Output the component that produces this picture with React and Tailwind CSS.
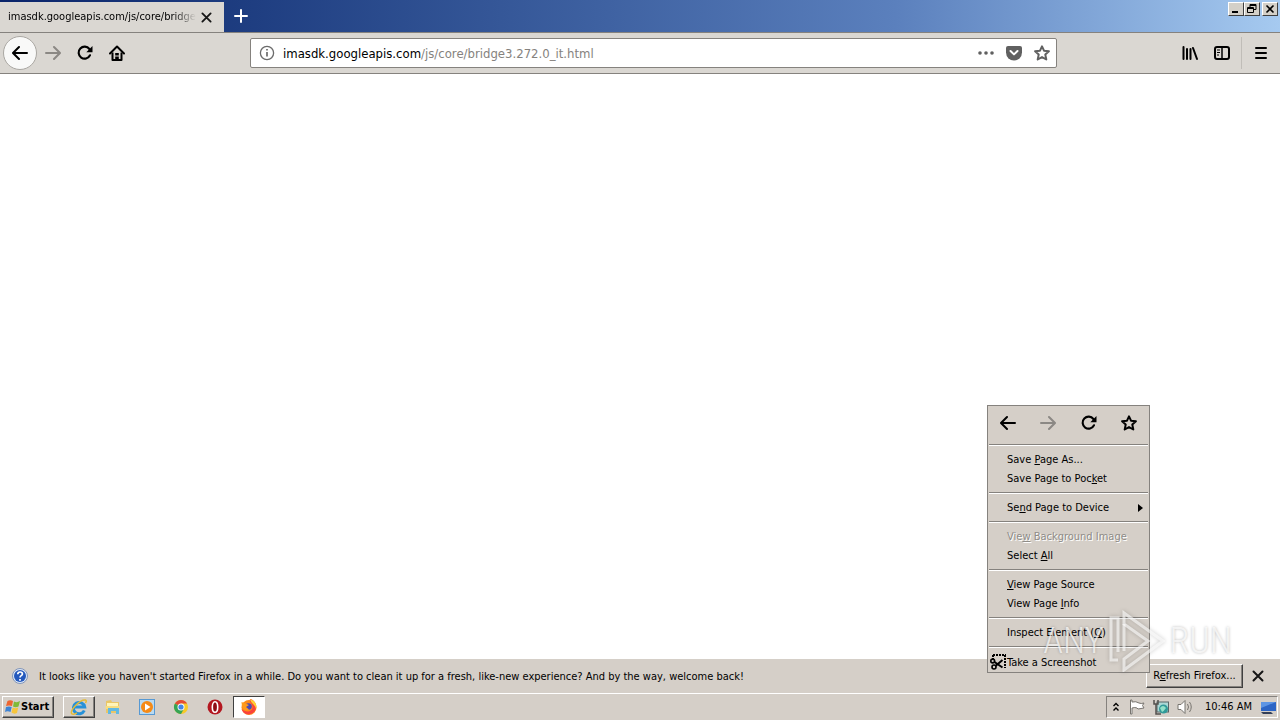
const ink = 'fill-none stroke-black';

function Back({ className = 'stroke-black' }) {
  return (
    <svg viewBox="0 0 16 16" className={`size-4 fill-none ${className}`} strokeWidth="2" strokeLinecap="round" strokeLinejoin="round">
      <path d="M15 8H1.5M7 2L1 8l6 6" />
    </svg>
  );
}
function Forward() {
  return (
    <svg viewBox="0 0 16 16" className="size-4 fill-none stroke-[#8b8884]" strokeWidth="2" strokeLinecap="round" strokeLinejoin="round">
      <path d="M1 8h13.5M9 2l6 6-6 6" />
    </svg>
  );
}
function Reload() {
  return (
    <svg viewBox="0 0 16 16" className="size-4">
      <path d="M13 10.3A6 6 0 1 1 12.4 4" className={ink} strokeWidth="2.1" strokeLinecap="round" />
      <path d="M15.5 1v6.2H9.3z" />
    </svg>
  );
}
function Home() {
  return (
    <svg viewBox="0 0 16 16" className="size-4">
      <path d="M1 8.5L8 1.5l7 7" className={ink} strokeWidth="2" strokeLinecap="round" strokeLinejoin="round" />
      <path d="M3.5 7.5V15h9V7.5" className={ink} strokeWidth="2" strokeLinejoin="round" />
      <path d="M6.2 8h3.6v2.500H6.200zM6.200 11.500h3.600V15H6.200z" />
    </svg>
  );
}
function Star({ className = 'stroke-black' }) {
  return (
    <svg viewBox="0 0 16 16" className={`size-4 fill-none ${className}`} strokeWidth="2" strokeLinejoin="round">
      <path d="M8 1.3l2 4.4 4.9.6-3.6 3.3 1 4.9L8 12.1l-4.3 2.4 1-4.9L1.1 6.3 6 5.7z" />
    </svg>
  );
}
function Close({ className = 'size-3' }) {
  return (
    <svg viewBox="0 0 12 12" className={`fill-none stroke-[#161616] ${className}`} strokeWidth="2" strokeLinecap="round">
      <path d="M1.5 1.5l9 9M10.5 1.5l-9 9" />
    </svg>
  );
}

function CaptionButton({ label, children }) {
  return (
    <button aria-label={label} className="flex h-[14px] w-4 items-center justify-center border border-t-white border-l-white border-r-[#404040] border-b-[#404040] bg-[#d4d0c8]">
      <svg viewBox="0 0 12 10" className="h-[10px] w-3 fill-none stroke-black">{children}</svg>
    </button>
  );
}

function TitleBar() {
  return (
    <header className="flex h-8 items-start bg-linear-to-r from-[#0a246a] from-0% via-[#5b80bd] via-70% to-[#a6caf0] to-100%">
      <div className="mt-0.5 flex h-[30px] w-56 items-center bg-[#dad7d2] pl-2">
        <span className="w-[188px] overflow-hidden whitespace-nowrap bg-linear-to-r from-black from-88% to-transparent bg-clip-text text-[11px] text-transparent">
          imasdk.googleapis.com/js/core/bridge3.272.0_it.html
        </span>
        <button aria-label="Close tab" className="ml-0.5 flex size-4 items-center justify-center"><Close className="size-[11px]" /></button>
      </div>
      <button aria-label="New tab" className="flex h-8 w-[34px] items-center justify-center">
        <svg viewBox="0 0 14 14" className="size-[14px] stroke-white" strokeWidth="2" strokeLinecap="round"><path d="M7 1v12M1 7h12" /></svg>
      </button>
      <div className="mt-0.5 mr-0.5 ml-auto flex">
        <CaptionButton label="Minimize"><path d="M2 8h6" strokeWidth="2" /></CaptionButton>
        <CaptionButton label="Restore"><path d="M4 3V.5h6v5H8M4 1.5h6M1.5 3.5h6v5h-6zM1.5 4.5h6" /></CaptionButton>
        <span className="w-0.5" />
        <CaptionButton label="Close"><path d="M2.5 1.5l7 7M9.5 1.5l-7 7" strokeWidth="1.6" /></CaptionButton>
      </div>
    </header>
  );
}

function Toolbar() {
  return (
    <nav className="flex h-[42px] items-center border-y border-[#85827e] bg-[#dad7d2]">
      <button aria-label="Back" className="ml-[3px] flex size-[34px] items-center justify-center rounded-full border border-[#aaa7a2] bg-[#f9f9f8]"><Back /></button>
      <button aria-label="Forward" className="ml-2 flex size-4" disabled><Forward /></button>
      <button aria-label="Reload" className="ml-4 flex size-4"><Reload /></button>
      <button aria-label="Home" className="ml-4 flex size-4"><Home /></button>
      <div className="ml-[125px] flex h-[30px] flex-1 items-center rounded-xs border border-[#85827e] bg-white pr-1.5 pl-2">
        <svg viewBox="0 0 16 16" className="size-4 fill-none stroke-[#6b6b6b]" strokeWidth="1.3">
          <circle cx="8" cy="8" r="6.6" /><path d="M8 7v4.5M8 4v1.6" strokeWidth="1.7" />
        </svg>
        <a href="#address" className="ml-2 flex-1 pt-0.5 text-[13px] whitespace-nowrap text-[#85827e]">
          <span className="text-black">imasdk.googleapis.com</span>/js/core/bridge3.272.0_it.html
        </a>
        <button aria-label="Page actions">
          <svg viewBox="0 0 16 16" className="size-4 fill-[#606060]"><circle cx="2" cy="8" r="1.800" /><circle cx="8" cy="8" r="1.800" /><circle cx="14" cy="8" r="1.800" /></svg>
        </button>
        <button aria-label="Save to Pocket" className="ml-3">
          <svg viewBox="0 0 16 16" className="size-4"><path d="M2 1h12q2 0 2 2v4.500a8 8 0 0 1-16 0V3q0-2 2-2z" className="fill-[#606060]" /><path d="M4.500 6L8 9.400 11.500 6" className="fill-none stroke-white" strokeWidth="2" strokeLinecap="round" strokeLinejoin="round" /></svg>
        </button>
        <button aria-label="Bookmark" className="ml-3"><Star className="stroke-[#606060]" /></button>
      </div>
      <button aria-label="Library" className="ml-[125px]">
        <svg viewBox="0 0 16 16" className={`size-4 ${ink}`} strokeWidth="2" strokeLinecap="round"><path d="M1.500 2v12M5 4v10M8.500 4v10M11 3l4 11" /></svg>
      </button>
      <button aria-label="Sidebars" className="ml-4">
        <svg viewBox="0 0 16 16" className={`size-4 ${ink}`} strokeWidth="2"><rect x="1" y="2" width="14" height="12" rx="2" /><path d="M8 2v12" strokeWidth="1.500" /><path d="M3 5h3M3 7.500h3M3 10h2" strokeWidth="1" /></svg>
      </button>
      <span className="ml-[11px] h-8 w-px bg-[#c0bdb8]" />
      <button aria-label="Open menu" className="mr-[11px] ml-[11px]">
        <svg viewBox="0 0 16 16" className={`size-4 ${ink}`} strokeWidth="2" strokeLinecap="round"><path d="M3 3h10M3 8h10M3 13h10" /></svg>
      </button>
    </nav>
  );
}

const Separator = () => <hr className="mx-px my-1 h-0.5 border-t border-b border-t-[#85827e] border-b-white" />;

function MenuItem({ before = '', accessKey = '', after = '', disabled = false, children }) {
  return (
    <button role="menuitem" disabled={disabled} className="flex h-[19px] w-full items-center pl-[19px] text-left whitespace-pre disabled:text-[#8f8c87] disabled:[text-shadow:1px_1px_0_#fff]">
      <span className="pt-0.5">{before}<span className="underline underline-offset-1">{accessKey}</span>{after}</span>
      {children}
    </button>
  );
}

function ContextMenu() {
  return (
    <div role="menu" className="absolute right-[130px] bottom-[47px] w-[163px] border border-[#85827e] bg-[#d5cfc8]">
      <div className="flex h-[34px] items-center justify-between px-3">
        <button aria-label="Back"><Back /></button>
        <button aria-label="Forward" disabled><Forward /></button>
        <button aria-label="Reload"><Reload /></button>
        <button aria-label="Bookmark"><Star /></button>
      </div>
      <Separator />
      <MenuItem before="Save " accessKey="P" after="age As..." />
      <MenuItem before="Save Page to Poc" accessKey="k" after="et" />
      <Separator />
      <MenuItem before="Se" accessKey="n" after="d Page to Device">
        <svg viewBox="0 0 5 8" className="mr-1.5 ml-auto h-2 w-[5px]"><path d="M0 0l5 4-5 4z" /></svg>
      </MenuItem>
      <Separator />
      <MenuItem before="Vie" accessKey="w" after=" Background Image" disabled />
      <MenuItem before="Select " accessKey="A" after="ll" />
      <Separator />
      <MenuItem accessKey="V" after="iew Page Source" />
      <MenuItem before="View Page " accessKey="I" after="nfo" />
      <Separator />
      <MenuItem before="Inspect Element (" accessKey="Q" after=")" />
      <Separator />
      <button role="menuitem" className="flex h-5 w-full items-center pl-0.5 text-left">
        <svg viewBox="0 0 16 16" className={`size-4 ${ink}`} strokeWidth="1.600">
          <path d="M3 1h13M15 1v13" strokeWidth="2" strokeDasharray="2 1" />
          <path d="M3 1v4" strokeWidth="2" strokeDasharray="2 1" />
          <circle cx="2.700" cy="7" r="1.900" /><circle cx="4" cy="13" r="2" />
          <path d="M4.500 8l8 5.500M5.500 12l7-6" strokeWidth="2" />
        </svg>
        <span className="ml-px pt-0.5">Take a Screenshot</span>
      </button>
    </div>
  );
}

function Watermark() {
  return (
    <div className="pointer-events-none absolute right-12 bottom-12 flex items-center gap-1 font-['Liberation_Sans_Narrow','Roboto_Condensed','Roboto',sans-serif] text-[36px] leading-[62px] font-light text-white/70 [text-shadow:0_0_3px_#0004]">
      <span>ANY</span>
      <svg viewBox="0 0 58 62" className="h-[62px] w-[58px] fill-none stroke-white/60 drop-shadow-[0_0_2px_#0005]" strokeWidth="3">
        <path d="M11 50H4V8h7v34M17 3l39 28-39 29V49l24-18-24-17z" /><path d="M17 14v27" />
      </svg>
      <span>RUN</span>
    </div>
  );
}

function Notification() {
  return (
    <section className="flex h-[34px] items-center bg-[#d5cfc8] pl-3">
      <svg viewBox="0 0 16 16" className="size-4">
        <circle cx="8" cy="8" r="7.500" className="fill-[#dce8f8] stroke-[#8295b8]" /><circle cx="8" cy="8" r="6" className="fill-[#2459bd]" />
        <path d="M5.800 6.200c0-3 4.600-2.800 4.600-.2C10.400 7.700 8 7.600 8 9.400M8 11v1.700" className="fill-none stroke-white" strokeWidth="1.700" />
      </svg>
      <p className="ml-[11px] flex-1 pt-0.5 whitespace-nowrap">It looks like you haven't started Firefox in a while. Do you want to clean it up for a fresh, like-new experience? And by the way, welcome back!</p>
      <button className="h-6 w-[97px] border border-t-white border-l-white border-r-[#404040] border-b-[#404040] text-center shadow-[inset_-1px_-1px_#85827e]">R<span className="underline underline-offset-1">e</span>fresh Firefox...</button>
      <button aria-label="Dismiss" className="mr-4 ml-[9px]"><Close /></button>
    </section>
  );
}

const raised = 'border border-t-white border-l-white border-r-[#404040] border-b-[#404040] shadow-[inset_-1px_-1px_#85827e]';

function Taskbar() {
  return (
    <footer className="flex h-[27px] items-center border-t border-white bg-[#d5cfc8] px-0.5 pb-px">
      <button className={`flex h-[22px] w-[52px] items-center pl-0.5 font-bold ${raised}`}>
        <svg viewBox="0 0 16 16" className="size-4">
          <path d="M2.500 2Q5 .500 8 2L7 7Q4 6 1 7z" className="fill-[#ee6530]" /><path d="M9 2.500q3 1.500 6-.500l-1.500 5.500q-3 1.500-5.500 0z" className="fill-[#80ba37]" />
          <path d="M1 8q3-1 5.700 0L5.500 13q-3-1.500-5.500 0z" className="fill-[#3d83d4]" /><path d="M7.700 8.500q2.500 1.500 5.500 0L12 14q-3 1.500-5.500-.5z" className="fill-[#f7c53b]" />
        </svg>
        <span className="pt-0.5">Start</span>
      </button>
      <button aria-label="Internet Explorer" className={`ml-[9px] flex h-[22px] w-8 items-center justify-center ${raised}`}>
        <svg viewBox="0 0 18 18" className="size-[18px] fill-none">
          <path d="M14.300 12.500A5.700 5.700 0 1 1 14.700 9H5" className="stroke-[#2691d9]" strokeWidth="3" />
          <path d="M2 16C-1 13 10 1 15.500 2c1.500.5.500 2 0 3M2 16c1.500 1 4-.5 5-1" className="stroke-[#e4bb36]" strokeWidth="1.500" />
        </svg>
      </button>
      <button aria-label="Explorer" className="ml-[9px]">
        <svg viewBox="0 0 18 18" className="size-[18px]"><path d="M2 3l5-1 1 2h7v11H2z" className="fill-[#e9c667]" /><path d="M3 5h11v5H3z" className="fill-[#fff4b8]" /><path d="M1.500 8h14v3h-14z" className="fill-[#f6dd80]" /><path d="M4 16v-6h11v6h-3v-3H7v3z" className="fill-[#62b9e2]" /></svg>
      </button>
      <button aria-label="Media Player" className="ml-4">
        <svg viewBox="0 0 18 18" className="size-[18px]"><rect x="1.500" y="1.500" width="15" height="15" className="fill-[#b9daf1] stroke-[#5799d3]" /><circle cx="9" cy="9" r="6" className="fill-[#f58a16]" /><path d="M7 5.500l5.500 3.500L7 12.500z" className="fill-white" /></svg>
      </button>
      <button aria-label="Chrome" className="ml-4">
        <svg viewBox="0 0 18 18" className="size-[18px]"><circle cx="9" cy="9" r="7" className="fill-[#f7c928]" /><path d="M9 9L2.900 5.500A7 7 0 0 1 15.100 5.500H9z" className="fill-[#e34a36]" /><path d="M9 9L2.900 5.500A7 7 0 0 0 9 16l3-5.300z" className="fill-[#36a455]" /><circle cx="9" cy="9" r="3.500" className="fill-white" /><circle cx="9" cy="9" r="2.600" className="fill-[#4385e6]" /></svg>
      </button>
      <button aria-label="Opera" className="ml-4">
        <svg viewBox="0 0 18 18" className="size-[18px]"><circle cx="9" cy="9" r="7.500" className="fill-[#b41720]" /><ellipse cx="9" cy="9" rx="2.700" ry="5.300" className="fill-[#8f0c15] stroke-white" strokeWidth="1.600" /></svg>
      </button>
      <button aria-label="Firefox" className="ml-[9px] flex h-[22px] w-8 items-center justify-center border border-t-[#404040] border-l-[#404040] border-r-white border-b-white bg-white">
        <svg viewBox="0 0 18 18" className="size-[18px]"><circle cx="9" cy="9.500" r="7.500" className="fill-[#ff8b18]" /><path d="M10 1c6 1 8 9 4 13-4 4-11 3-12.500-3 4 4 11 3 11-2C12.500 5 9 5 10 1z" className="fill-[#fa423c]" /><path d="M10 1c5 2 7 5 6 10-1-5-5-5-6-10z" className="fill-[#ffd132]" /><circle cx="8.500" cy="8.500" r="3.300" className="fill-[#4b49b5]" /><path d="M1.500 4l4 1.500L9 7l-3 2 3 2.500C5 14 2 11 1.500 4z" className="fill-[#ff9b1c]" /></svg>
      </button>
      <div className="ml-auto flex h-[22px] items-center border border-t-[#85827e] border-l-[#85827e] border-r-white border-b-white pr-px pl-1.5">
        <button aria-label="Show hidden icons"><svg viewBox="0 0 6 10" className={`h-[10px] w-1.5 ${ink}`} strokeWidth="1.400"><path d="M.5 4L3 1.500 5.500 4M.5 8.500L3 6l2.500 2.500" /></svg></button>
        <svg viewBox="0 0 16 16" className="ml-2.5 size-4 fill-white stroke-[#77746f]"><path d="M1.500 1v14h1.500V9q3-1 5 0l1 1 6-1-1.500-2.500L15 4q-3 1-5 0-3-2-7-1V1z" /></svg>
        <svg viewBox="0 0 16 16" className="ml-2 size-4"><rect x="4" y="3" width="11.500" height="10" className="fill-[#acd8d6] stroke-[#596668]" /><path d="M1 1v4h4V1M3 5v10h5" className="fill-none stroke-[#53514e]" strokeWidth="1.500" /><circle cx="10.500" cy="10" r="4.500" className="fill-[#309a99]" /><path d="M7 9q3-4 6 0-2 3-4 4z" className="fill-[#93e0c8]" /></svg>
        <svg viewBox="0 0 16 16" className="ml-2 size-4 fill-white stroke-[#77746f]"><path d="M1 5.500h3l4-4v13l-4-4H1z" /><path d="M10.500 5q2 3 0 6M12.500 3q3.500 5 0 10" className="fill-none" /></svg>
        <time className="ml-3 pt-0.5">10:46 AM</time>
        <svg viewBox="0 0 16 16" className="ml-2 size-4"><path d="M1 3h15v9H1z" className="fill-[#2c65c5]" /><path d="M1 3h15L1 9z" className="fill-[#5d95e4]" /><path d="M1 13h10l2 2H3z" className="fill-[#333f58]" /></svg>
      </div>
    </footer>
  );
}

export default function App() {
  return (
    <div className="relative flex min-h-screen flex-col bg-white font-['DejaVu_Sans_Condensed','DejaVu_Sans',sans-serif] text-[11px] text-black">
      <TitleBar />
      <Toolbar />
      <main className="flex-1" />
      <Notification />
      <Taskbar />
      <ContextMenu />
      <Watermark />
    </div>
  );
}
